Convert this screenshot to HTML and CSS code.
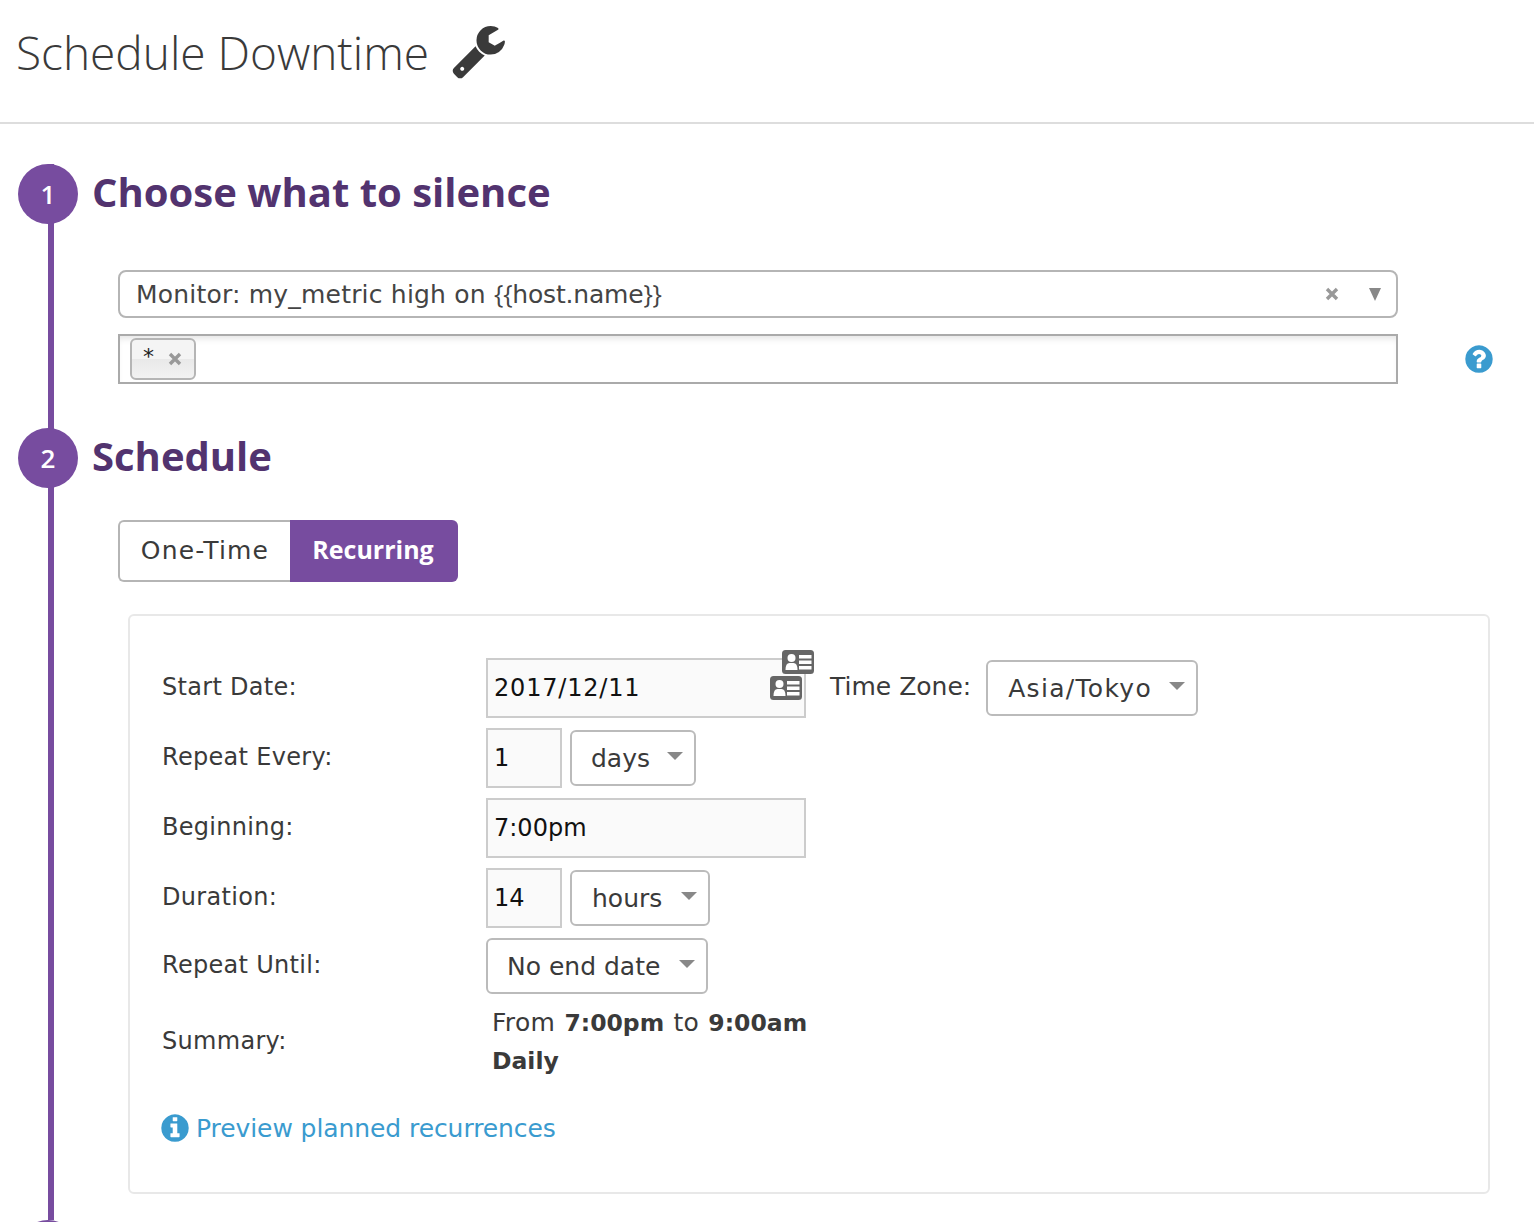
FILE: index.html
```html
<!DOCTYPE html>
<html lang="en">
<head>
    <meta charset="UTF-8">
    <meta name="viewport" content="width=device-width, initial-scale=1.0">
    <title>Schedule Downtime</title>
    <link rel="stylesheet" href="styles.css">
</head>
<body>
    <header class="page-head">
        <h1>Schedule Downtime</h1>
        <svg class="wrench" viewBox="0 0 1792 1792"><path d="M448 1472q0-26-19-45t-45-19-45 19-19 45 19 45 45 19 45-19 19-45zm644-420l-682 682q-37 37-90 37-52 0-91-37l-106-108q-38-36-38-90 0-53 38-91l681-681q39 98 114.5 173.5t173.5 114.5zm634-435q0 39-23 106-47 134-164.5 217.5t-258.5 83.5q-185 0-316.5-131.5t-131.5-316.5 131.5-316.5 316.5-131.5q58 0 121.5 16.5t107.5 46.5q16 11 16 28t-16 28l-293 169v224l193 107q5-3 79-48.5t135.5-81 70.5-35.5q15 0 23.5 10t8.5 25z"/></svg>
    </header>

    <main class="steps">
        <section class="step step-silence">
            <span class="step-num">1</span>
            <h2>Choose what to silence</h2>
            <div class="silence-fields">
                <div class="combo">
                    <span class="combo-text">Monitor: my_metric high on <span class="template"><span class="brace">{{</span>host.name<span class="brace">}}</span></span></span>
                    <svg class="x-icon combo-clear" viewBox="0 0 14 14"><path d="M2 2l10 10M12 2L2 12"/></svg>
                    <span class="combo-arrow"></span>
                </div>
                <div class="tag-row">
                    <div class="tag-input">
                        <span class="tag"><span class="tag-star">*</span><svg class="x-icon tag-x" viewBox="0 0 14 14"><path d="M2 2l10 10M12 2L2 12"/></svg></span>
                    </div>
                    <svg class="help" viewBox="0 0 1792 1792"><path d="M1024 1376v-192q0-14-9-23t-23-9h-192q-14 0-23 9t-9 23v192q0 14 9 23t23 9h192q14 0 23-9t9-23zm256-672q0-88-55.5-163t-138.5-116-170-41q-243 0-371 213-15 24 8 42l132 100q7 6 19 6 16 0 25-12 53-68 86-92 34-24 86-24 48 0 85.5 26t37.5 59q0 38-20 61t-68 45q-63 28-115.5 86.5t-52.5 125.5v36q0 14 9 23t23 9h192q14 0 23-9t9-23q0-19 21.5-49.5t54.5-49.5q32-18 49-28.5t46-35 44.5-48 28-60.5 12.5-81zm384 192q0 209-103 385.5t-279.5 279.5-385.5 103-385.5-103-279.5-279.5-103-385.5 103-385.5 279.5-279.5 385.5-103 385.5 103 279.5 279.5 103 385.5z"/></svg>
                </div>
            </div>
        </section>

        <section class="step step-schedule">
            <span class="step-num">2</span>
            <h2>Schedule</h2>
            <div class="toggle">
                <span class="toggle-btn">One-Time</span>
                <span class="toggle-btn active">Recurring</span>
            </div>

            <div class="panel">
                <div class="form-row row-date">
                    <label>Start Date:</label>
                    <div class="field field-wide field-date">
                        2017/12/11
                        <svg class="card card-top" viewBox="0 0 32 24"><use href="#card-icon"/></svg>
                        <svg class="card card-bottom" viewBox="0 0 32 24"><use href="#card-icon"/></svg>
                    </div>
                    <label class="tz-label">Time Zone:</label>
                    <div class="select select-tz">Asia/Tokyo<span class="caret"></span></div>
                </div>
                <div class="form-row">
                    <label>Repeat Every:</label>
                    <div class="field field-small">1</div>
                    <div class="select select-days">days<span class="caret"></span></div>
                </div>
                <div class="form-row">
                    <label>Beginning:</label>
                    <div class="field field-wide">7:00pm</div>
                </div>
                <div class="form-row">
                    <label>Duration:</label>
                    <div class="field field-small">14</div>
                    <div class="select select-hours">hours<span class="caret"></span></div>
                </div>
                <div class="form-row row-until">
                    <label>Repeat Until:</label>
                    <div class="select select-until">No end date<span class="caret"></span></div>
                </div>
                <div class="form-row row-summary">
                    <label>Summary:</label>
                    <div class="summary">
                        <div>From <strong>7:00pm</strong> to <strong>9:00am</strong></div>
                        <div><strong>Daily</strong></div>
                    </div>
                </div>
                <a class="preview" href="#">
                    <svg class="info" viewBox="0 0 1792 1792"><path d="M1152 1376v-160q0-14-9-23t-23-9h-96v-512q0-14-9-23t-23-9h-320q-14 0-23 9t-9 23v160q0 14 9 23t23 9h96v320h-96q-14 0-23 9t-9 23v160q0 14 9 23t23 9h448q14 0 23-9t9-23zm-128-896v-160q0-14-9-23t-23-9h-192q-14 0-23 9t-9 23v160q0 14 9 23t23 9h192q14 0 23-9t9-23zm640 416q0 209-103 385.5t-279.5 279.5-385.5 103-385.5-103-279.5-279.5-103-385.5 103-385.5 279.5-279.5 385.5-103 385.5 103 279.5 279.5 103 385.5z"/></svg>
                    Preview planned recurrences
                </a>
            </div>
        </section>

        <section class="step step-next">
            <span class="step-num"></span>
        </section>
    </main>

    <svg class="defs" width="0" height="0">
        <symbol id="card-icon" viewBox="0 0 32 24">
            <rect width="32" height="24" rx="3.5" fill="#666"/>
            <circle cx="9.5" cy="8" r="4" fill="#fff"/>
            <path d="M3.5 20 q0-7 4-7 h4 q4 0 4 7z" fill="#fff"/>
            <path d="M17 5h12.5v3.5h-12.5zM17 10.5h12.5v3.5h-12.5zM17 16h12.5v3.5h-12.5z" fill="#fff"/>
        </symbol>
    </svg>
</body>
</html>
```

FILE: styles.css
```css
html, body {
    height: 100%;
    overflow: hidden;
}

body {
    margin: 0;
    font-family: 'DejaVu Sans', sans-serif;
    font-size: 25px;
    color: #3a3a3a;
    background: #fff;
}

.page-head {
    display: flex;
    align-items: flex-start;
    height: 122px;
    padding-left: 16px;
    border-bottom: 2px solid #ddd;
}

.page-head h1 {
    margin: 24px 0 0;
    font-family: 'Open Sans', sans-serif;
    font-size: 46px;
    font-weight: 300;
    line-height: 56px;
    color: #3a3a3a;
}

.wrench {
    width: 57px;
    height: 57px;
    margin: 22px 0 0 21px;
    fill: #3a3a3a;
}

.steps {
    margin: 40px 0 0 48px;
}

/* the purple line is each step's left border */
.step {
    position: relative;
    box-sizing: border-box;
    border-left: 6px solid #774c9f;
    padding-left: 38px;
}

.step-silence {
    height: 264px;
}

.step-schedule {
    height: 792px;
}

.step-num {
    position: absolute;
    top: 0;
    left: -36px;
    width: 60px;
    height: 60px;
    border-radius: 50%;
    background: #774c9f;
    color: #fff;
    font-family: 'Open Sans', sans-serif;
    font-size: 26px;
    font-weight: 600;
    line-height: 60px;
    text-align: center;
}

.step h2 {
    margin: 0;
    font-family: 'Open Sans', sans-serif;
    font-size: 40px;
    font-weight: 700;
    line-height: 56px;
    color: #52336f;
}

.silence-fields {
    margin: 50px 0 0 26px;
}

.combo {
    display: flex;
    align-items: center;
    box-sizing: border-box;
    width: 1280px;
    height: 48px;
    padding: 0 15px 2px 16px;
    border: 2px solid #b5b5b5;
    border-radius: 8px;
    color: #444;
    letter-spacing: 0.2px;
}

.combo-text {
    flex: 1;
}

.template {
    letter-spacing: -0.2px;
}

.brace {
    font-family: 'Open Sans', sans-serif;
}

.x-icon {
    width: 14px;
    height: 14px;
    fill: none;
    stroke: #999;
    stroke-width: 3.4;
}

.combo-clear {
    margin-top: 2px;
}

.combo-arrow {
    width: 0;
    height: 0;
    margin: 2px 0 0 30px;
    border-left: 6px solid transparent;
    border-right: 6px solid transparent;
    border-top: 13px solid #888;
}

.tag-row {
    display: flex;
    align-items: center;
    margin-top: 16px;
}

.tag-input {
    box-sizing: border-box;
    width: 1280px;
    height: 50px;
    padding: 2px 10px;
    border: 2px solid #aaa;
    box-shadow: inset 0 6px 6px -3px #e6e6e6;
}

.tag {
    display: flex;
    box-sizing: border-box;
    width: 66px;
    height: 42px;
    padding-left: 11px;
    border: 2px solid #b5b5b5;
    border-radius: 6px;
    background: linear-gradient(#f4f4f4 50%, #e9e9e9 50%, #f2f2f2);
}

.tag-star {
    color: #222;
    font-size: 22px;
    line-height: 34px;
}

.tag-x {
    margin: 12px 0 0 14px;
}

.help {
    width: 32px;
    height: 32px;
    margin-left: 65px;
    fill: #3a9bcf;
}

.toggle {
    display: flex;
    width: 340px;
    height: 62px;
    margin: 36px 0 0 26px;
}

.toggle-btn {
    flex: 1;
    box-sizing: border-box;
    border: 2px solid #b5b5b5;
    border-right: 0;
    border-radius: 6px 0 0 6px;
    line-height: 58px;
    letter-spacing: 1.2px;
    text-align: center;
    color: #3a3a3a;
}

.toggle-btn.active {
    flex: 0 0 168px;
    padding-right: 2px;
    border: 0;
    border-radius: 0 6px 6px 0;
    background: #774c9f;
    color: #fff;
    font-weight: 700;
    font-family: 'Open Sans', sans-serif;
    letter-spacing: 0;
    line-height: 58px;
}

.panel {
    box-sizing: border-box;
    width: 1362px;
    height: 580px;
    margin: 32px 0 0 36px;
    padding: 42px 32px 0;
    border: 2px solid #e8e8e8;
    border-radius: 6px;
}

.form-row {
    display: flex;
    align-items: center;
    height: 60px;
    margin-bottom: 10px;
}

.form-row label {
    flex: 0 0 324px;
    margin-bottom: 2px;
    font-size: 24px;
    letter-spacing: 0.3px;
}

.form-row .tz-label {
    flex: none;
    margin: 0 15px 3px 24px;
    font-size: 25px;
    letter-spacing: 0;
}

.field {
    position: relative;
    box-sizing: border-box;
    height: 60px;
    padding-left: 6px;
    border: 2px solid #ccc;
    background: #fafafa;
    color: #111;
    font-size: 24px;
    line-height: 56px;
}

.field-wide {
    width: 320px;
}

.field-date {
    letter-spacing: 0.8px;
}

.field-small {
    width: 76px;
}

.card {
    position: absolute;
    width: 32px;
    height: 24px;
}

.card-top {
    top: -10px;
    right: -10px;
}

.card-bottom {
    top: 16px;
    right: 2px;
}

.select {
    position: relative;
    box-sizing: border-box;
    height: 56px;
    padding-left: 19px;
    border: 2px solid #bbb;
    border-radius: 6px;
    line-height: 54px;
    color: #3a3a3a;
}

.caret {
    position: absolute;
    top: 20px;
    right: 11px;
    width: 0;
    height: 0;
    border-left: 8px solid transparent;
    border-right: 8px solid transparent;
    border-top: 8px solid #888;
}

.select-tz {
    width: 212px;
    padding-left: 20px;
    letter-spacing: 1.3px;
}

.select-days {
    width: 126px;
    margin-left: 8px;
}

.select-hours {
    width: 140px;
    margin-left: 8px;
    padding-left: 20px;
}

.select-until {
    width: 222px;
}

.row-until {
    height: 56px;
}

.row-summary {
    height: 76px;
    margin-top: 10px;
    margin-bottom: 0;
}

.summary {
    margin-left: 6px;
    line-height: 38px;
    letter-spacing: 0.3px;
    word-spacing: 1px;
}

.summary strong {
    font-size: 23.5px;
    letter-spacing: 0;
}

.preview {
    display: flex;
    align-items: center;
    gap: 5px;
    margin: 32px 0 0 -3px;
    color: #3a9bcf;
    letter-spacing: -0.08px;
    text-decoration: none;
}

.info {
    width: 32px;
    height: 32px;
    fill: #3a9bcf;
}

.defs {
    position: absolute;
}
```
